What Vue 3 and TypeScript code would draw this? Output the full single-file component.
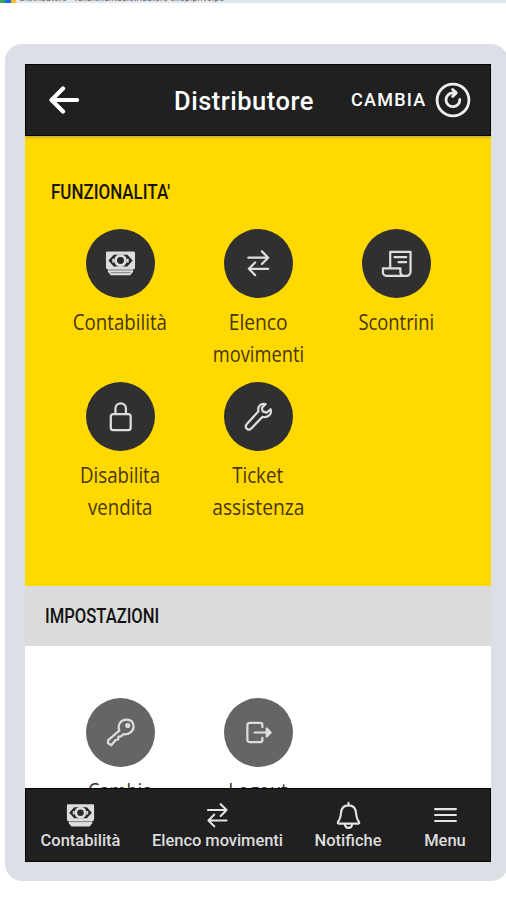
<script setup lang="ts">
type IconName = 'cash' | 'swap' | 'receipt' | 'lock' | 'wrench' | 'key' | 'exit' | 'bell' | 'menu'
interface Action { icon: IconName; lines: string[]; fit: string[] }
interface Tab { icon: IconName; label: string; cls: string }

const paths: Record<IconName, string> = {
  cash: '',
  swap: 'M5.500 10H26M19.500 3.500L26 10l-6.500 6.500M26 21.500H6M12.500 15L6 21.500l6.500 6.500',
  receipt: 'M9.500 20.500V4h21v20.500a4.200 4.200 0 0 1-4.200 4.200H5.500A3.500 3.500 0 0 1 2 25.200V21h18v3.500c0 2.800 2 4.200 4 4.200M14 9.500h12M18 14.500h8',
  lock: 'M8.500 13.500H24a2.500 2.500 0 0 1 2.500 2.500v11.500A2.500 2.500 0 0 1 24 30H8.500A2.500 2.500 0 0 1 6 27.500V16a2.500 2.500 0 0 1 2.500-2.500ZM10.800 13.500V7.800a5.400 5.400 0 0 1 10.800 0v5.700',
  wrench: 'M28.500 8.500L24.300 12l-4-1.300-.8-3.700 3.800-3.800c-5.300-1.200-8.500 2.600-7.300 7.400L4 23.800c-3 3.400 1 7.700 4.600 4.500l11.600-12c5.300 1.200 10.100-2.400 8.300-7.800Z',
  key: 'M14.800 14C12.500 7.500 16.500 2.800 22 2.800s7.500 3.700 7.500 7.500-4.500 8.500-10.700 7.500L16.500 20l-2.500.3-.5 2.900-2.500.6-4.500 5.400-3.500-2.400.4-3Z',
  exit: 'M20 10.500V8a2 2 0 0 0-2-2H7a2.500 2.500 0 0 0-2.500 2.500v15A2.500 2.500 0 0 0 7 26h11a2 2 0 0 0 2-2v-2.500M12 16h16M24.500 12l4 4-4 4Z',
  bell: 'M16 2v3M5.500 25C3.800 25 4 23.800 4.500 22.800 6.500 20.500 7.300 18 7.800 12.500 8.300 7.500 11 4.800 16 4.800s7.700 2.700 8.200 7.700c.5 5.500 1.300 8 3.300 10.300.5 1 .7 2.200-1 2.200ZM12 25.500c.3 5.500 7.700 5.500 8 0',
  menu: 'M4.500 9h23M4.500 15.500h23M4.500 22h23',
}
const functions: Action[] = [
  { icon: 'cash', lines: ['Contabilità'], fit: ['wide'] },
  { icon: 'swap', lines: ['Elenco', 'movimenti'], fit: ['wider', ''] },
  { icon: 'receipt', lines: ['Scontrini'], fit: [''] },
  { icon: 'lock', lines: ['Disabilita', 'vendita'], fit: ['wide', 'wide'] },
  { icon: 'wrench', lines: ['Ticket', 'assistenza'], fit: ['wide', 'wider'] },
]
const settings: Action[] = [
  { icon: 'key', lines: ['Cambia'], fit: [''] },
  { icon: 'exit', lines: ['Logout'], fit: [''] },
]
const tabs: Tab[] = [
  { icon: 'cash', label: 'Contabilità', cls: 't1' },
  { icon: 'swap', label: 'Elenco movimenti', cls: 't2' },
  { icon: 'bell', label: 'Notifiche', cls: 't3' },
  { icon: 'menu', label: 'Menu', cls: 't4' },
]
</script>

<template>
  <main class="page">
    <div class="strip"><i class="green"></i><i class="blue"></i><i class="amber"></i><span>Distributore - funzionalitadistributore shop.privé.pe</span></div>
    <section class="device">
      <div class="screen">
        <header class="bar">
          <svg class="back" viewBox="0 0 30 28"><path d="M28 14H3M14 2.500L2.500 14 14 25.500" /></svg>
          <h1>Distributore</h1>
          <span class="change">CAMBIA</span>
          <svg class="reload" viewBox="0 0 36 36"><circle cx="18" cy="18" r="15.900" /><path d="M24.800 17.500a6.900 6.900 0 1 1-6.900-6.600h3M17.600 7.500l3.700 3.400-3.700 3.500" /></svg>
        </header>
        <section class="functions">
          <h2><span>FUNZIONALITA'</span></h2>
          <div class="grid">
            <div v-for="a in functions" :key="a.icon" class="action">
              <div class="disc">
                <svg viewBox="0 0 32 32" class="icon" :class="a.icon">
                  <template v-if="a.icon === 'cash'"><path class="fill" d="M2.500 3.500h27A1.500 1.500 0 0 1 31 5v15.500a1.500 1.500 0 0 1-1.500 1.500H29v2.500l-3 3.500H6l-3-3.500V22h-.5A1.500 1.500 0 0 1 1 20.500V5a1.500 1.500 0 0 1 1.500-1.500Z" /><path class="dark" d="M3.500 13L9 7h14l5.500 6L23 19H9Z" /><path class="crease" d="M4 22.700h24M6 25.500h20" /><path class="fill" d="M7.500 11h2v4h-2ZM22.500 11h2v4h-2Z" /><circle class="fill" cx="16" cy="13" r="6.600" /><circle class="dark" cx="16" cy="13" r="3.600" /></template>
                  <path v-else :d="paths[a.icon]" />
                </svg>
              </div>
              <p><span v-for="(line, i) in a.lines" :key="line" :class="a.fit[i]">{{ line }}</span></p>
            </div>
          </div>
        </section>
        <h2 class="settings-title"><span>IMPOSTAZIONI</span></h2>
        <section class="settings">
          <div class="grid">
            <div v-for="a in settings" :key="a.icon" class="action">
              <div class="disc grey"><svg viewBox="0 0 32 32" class="icon" :class="a.icon"><path :d="paths[a.icon]" /><circle v-if="a.icon === 'key'" cx="23.500" cy="8.800" r="1.500" /></svg></div>
              <p><span v-for="line in a.lines" :key="line">{{ line }}</span></p>
            </div>
          </div>
        </section>
        <nav>
          <div v-for="t in tabs" :key="t.label" class="tab" :class="t.cls">
            <svg viewBox="0 0 32 32" class="icon" :class="t.icon">
              <template v-if="t.icon === 'cash'"><path class="fill" d="M2.500 3.500h27A1.500 1.500 0 0 1 31 5v15.500a1.500 1.500 0 0 1-1.500 1.500H29v2.500l-3 3.500H6l-3-3.500V22h-.5A1.500 1.500 0 0 1 1 20.500V5a1.500 1.500 0 0 1 1.500-1.500Z" /><path class="dark" d="M3.500 13L9 7h14l5.500 6L23 19H9Z" /><path class="crease" d="M4 22.700h24" /><path class="fill" d="M7.500 11h2v4h-2ZM22.500 11h2v4h-2Z" /><circle class="fill" cx="16" cy="13" r="6.600" /><circle class="dark" cx="16" cy="13" r="3.600" /></template>
              <path v-else :d="paths[t.icon]" />
            </svg>
            <span>{{ t.label }}</span>
          </div>
        </nav>
      </div>
    </section>
  </main>
</template>

<style>
body { margin: 0; background: #fff; overflow: hidden; }
</style>
<style scoped>
* { box-sizing: border-box; }
.page { width: 506px; height: 900px; overflow: hidden; font-family: Roboto, "Liberation Sans", sans-serif; }
.strip { height: 3px; background: #e1e6ea; display: flex; overflow: hidden; }
.strip i { width: 5px; height: 3px; flex: none; }
.strip .green { background: #38a852; }
.strip .blue { background: #1769ee; width: 6px; }
.strip .amber { background: #f3bd20; }
.strip span { font-size: 8px; line-height: 10px; margin: -6px 0 0 4px; color: #555; white-space: nowrap; letter-spacing: 0.46px; }
.device { margin: 41px 0 0 5px; width: 503px; height: 837px; background: #dce0e6; border-radius: 17px; padding: 20px 0 0 20px; }
.screen { width: 466px; height: 798px; background: #fff; display: flex; flex-direction: column; overflow: hidden; }
.bar { height: 72px; flex: none; background: #202020; border: 1px solid #050505; display: flex; align-items: center; color: #fff; position: relative; z-index: 1; box-shadow: 0 1px 3px #7779; }
svg { fill: none; stroke: #eee; stroke-width: 2.300; stroke-linejoin: round; stroke-linecap: round; flex: none; }
.back { width: 30px; height: 28px; margin-left: 23px; stroke: #fff; stroke-width: 4.200; }
h1 { margin: 1px 0 0 95px; width: 142px; font-size: 25.500px; font-weight: 500; line-height: 30px; letter-spacing: 0.5px; white-space: nowrap; }
.change { margin-left: 35px; width: 84px; font-size: 18px; font-weight: 500; letter-spacing: 1.25px; position: relative; top: -1px; }
.reload { width: 36px; height: 36px; stroke-width: 2.800; }
.functions { height: 450px; flex: none; background: #ffd900; padding-top: 44px; }
h2 { margin: 0; font-size: 20px; line-height: 24px; font-weight: 500; color: #171300; }
h2 span { display: inline-block; transform-origin: left; white-space: nowrap; }
.functions h2 { padding-left: 26px; }
.functions h2 span { transform: scaleX(.848); }
.grid { display: grid; grid-template-columns: repeat(3, 138px); padding-left: 26px; }
.functions .grid { margin-top: 25px; row-gap: 12px; }
.action { display: flex; flex-direction: column; align-items: center; height: 141px; }
.disc { width: 69px; height: 69px; border-radius: 50%; background: #303030; display: flex; align-items: center; justify-content: center; flex: none; }
.disc.grey { background: #656565; }
.icon { width: 31px; height: 31px; }
.disc .icon { stroke: #ddd; }
.icon .fill { fill: #ddd; stroke: none; }
.icon .dark { fill: #292929; stroke: none; }
.icon .crease { stroke: #777; stroke-width: 1; }
.action p { margin: 7.500px 0 0; color: #483600; font: 400 21px/32px "Open Sans", sans-serif; display: flex; flex-direction: column; align-items: center; }
.action p span { white-space: nowrap; display: block; transform: scaleX(.872); }
.action p .wide { transform: scaleX(.89); }
.action p .wider { transform: scaleX(.915); }
.settings-title { flex: none; height: 60px; padding: 18px 0 0 20px; background: #dcdcdc; color: #111; }
.settings-title span { transform: scaleX(.83); }
.settings { height: 142px; flex: none; padding-top: 52px; overflow: hidden; }
.settings .action p { color: #333; }
nav { height: 74px; flex: none; background: #202020; border: 1px solid #050505; display: flex; color: #ddd; }
.tab { display: flex; flex-direction: column; align-items: center; padding-top: 12px; flex: none; }
.tab .icon { width: 29px; height: 29px; stroke: #e4e4e4; }
.tab span { font-size: 16.500px; font-weight: 500; line-height: 20px; margin-top: 1px; white-space: nowrap; }
.t1 { width: 109px; }
.t2 { width: 165px; }
.t2 span { letter-spacing: -0.05px; }
.t3 { width: 96px; }
.t4 { width: 98px; }
</style>
